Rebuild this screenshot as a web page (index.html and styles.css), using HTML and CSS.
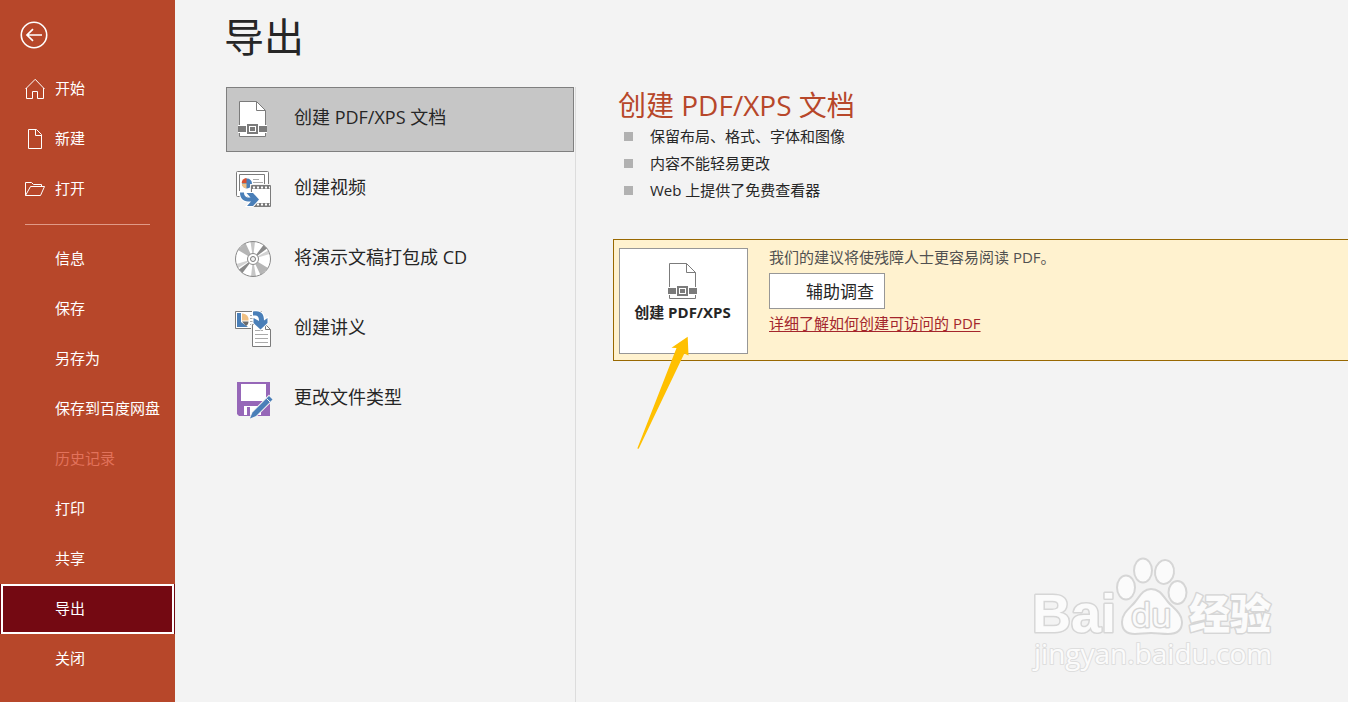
FILE: index.html
```html
<!DOCTYPE html>
<html lang="zh-CN">
<head>
    <meta charset="UTF-8">
    <meta name="viewport" content="width=device-width, initial-scale=1.0">
    <title>导出</title>
    <link rel="stylesheet" href="styles.css">
</head>
<body>
    <div class="backstage">
        <nav class="sidebar">
            <button type="button" class="back" aria-label="返回">
                <svg width="28" height="28" viewBox="0 0 28 28" fill="none" stroke="#fff">
                    <circle cx="14" cy="14" r="12.7" stroke-width="1.6"/>
                    <path d="M22 14H7M13 8.2L7 14l6 5.8" stroke-width="1.7"/>
                </svg>
            </button>

            <button type="button" class="nav-item with-icon">
                <svg width="22" height="22" viewBox="0 0 22 22" fill="none" stroke="#fff">
                    <path d="M1.5 11L11.2 1.3 20.5 11M2.5 10v10.5h6v-7h5v7h6V10"/>
                </svg>
                <span>开始</span>
            </button>
            <button type="button" class="nav-item with-icon">
                <svg width="22" height="22" viewBox="0 0 22 22" fill="none" stroke="#fff">
                    <path d="M4.5 1.5h8l5 5v14h-13zM11.500 1.500v6h6"/>
                </svg>
                <span>新建</span>
            </button>
            <button type="button" class="nav-item with-icon">
                <svg width="22" height="22" viewBox="0 0 22 22" fill="none" stroke="#fff">
                    <path d="M1.5 17.5v-13h6l2 2h8v2M1.5 17.5l5-9h14l-4 9z"/>
                </svg>
                <span>打开</span>
            </button>

            <hr class="divider">

            <button type="button" class="nav-item"><span>信息</span></button>
            <button type="button" class="nav-item"><span>保存</span></button>
            <button type="button" class="nav-item"><span>另存为</span></button>
            <button type="button" class="nav-item"><span>保存到百度网盘</span></button>
            <button type="button" class="nav-item" disabled><span>历史记录</span></button>
            <button type="button" class="nav-item"><span>打印</span></button>
            <button type="button" class="nav-item"><span>共享</span></button>
            <button type="button" class="nav-item active"><span>导出</span></button>
            <button type="button" class="nav-item"><span>关闭</span></button>
        </nav>

        <main class="main">
            <h1>导出</h1>
            <div class="columns">
                <div class="options">
                    <button type="button" class="option selected">
                        <svg width="40" height="41" viewBox="0 0 40 41">
                            <path d="M6.5 2.5h17l9 9v26h-26z" fill="#fff" stroke="#7b7b7b"/>
                            <path d="M23.5 2.5v9h9" fill="none" stroke="#7b7b7b"/>
                            <path d="M5 26h29v8H5z" fill="#fff"/>
                            <path d="M5 27h8v6H5zM26 27h8v6h-8z" fill="#7b7b7b"/>
                            <path d="M15 26h9v8h-9z" fill="#fff" stroke="#7b7b7b" stroke-width="2"/>
                            <path d="M17 28h5v4h-5z" fill="#7b7b7b"/>
                        </svg>
                        <span>创建 PDF/XPS 文档</span>
                    </button>
                    <button type="button" class="option">
                        <svg width="40" height="41" viewBox="0 0 40 41">
                            <rect x="3.5" y="2.5" width="32" height="25" rx="1" fill="#fff" stroke="#7b7b7b"/>
                            <path d="M6.5 22V5.5h25V15" fill="none" stroke="#7b7b7b"/>
                            <circle cx="14" cy="14.5" r="5" fill="#4a7fb8"/>
                            <path d="M13.5 14V9a5 5 0 0 0-4.8 5z" fill="#d9502f"/>
                            <path d="M13.5 14.5H8.7a5 5 0 0 0 4.8 5z" fill="#f0c083"/>
                            <path d="M20 10.5h6M20 13.5h10" stroke="#aaa"/>
                            <path d="M17 15h22v24H17z" fill="#f3f3f3"/>
                            <path d="M18.5 16.5h19v21h-19z" fill="#fff" stroke="#7b7b7b"/>
                            <path d="M19 18.5h18M19 35.5h18" stroke="#7b7b7b" stroke-width="3"/>
                            <path d="M20 18.5h17M20 35.5h17" stroke="#fff" stroke-width="2" stroke-dasharray="2 2"/>
                            <path d="M7 23.5h4c0 3.500 2 5 5 5h1.500l-4-4.500h6.500l6 6.500-6 6.500H14l4-4.500h-3C10 32.500 7 29 7 23.500z" fill="#4a7fb8" stroke="#fff" paint-order="stroke" stroke-width="2"/>
                        </svg>
                        <span>创建视频</span>
                    </button>
                    <button type="button" class="option">
                        <svg width="40" height="41" viewBox="0 0 40 41">
                            <circle cx="20" cy="20" r="17.5" fill="#fff"/>
                            <path d="M20 20L5 11l7.5-7z" fill="#b5b5b5"/>
                            <path d="M20 20L35 29l-7.5 7z" fill="#b5b5b5"/>
                            <path d="M20 20L17.5 2.5h4.5z" fill="#c6c6c6"/>
                            <path d="M20 20l-2 17.5h5z" fill="#c6c6c6"/>
                            <path d="M20 20L30.5 6l3.5 3.5z" fill="#8a8a8a"/>
                            <path d="M20 20L6 30.5 9.5 34z" fill="#8a8a8a"/>
                            <path d="M20 20L35 11.5l1.5 3.5z" fill="#d2d2d2"/>
                            <path d="M20 20L3.5 25l1.5 4z" fill="#d2d2d2"/>
                            <circle cx="20" cy="20" r="17.5" fill="none" stroke="#8a8a8a"/>
                            <circle cx="20" cy="20" r="5.5" fill="#fff" stroke="#8a8a8a"/>
                            <circle cx="20" cy="20" r="2.5" fill="#f3f3f3" stroke="#7b7b7b"/>
                        </svg>
                        <span>将演示文稿打包成 CD</span>
                    </button>
                    <button type="button" class="option">
                        <svg width="40" height="41" viewBox="0 0 40 41">
                            <path d="M2.5 2.5h26v17h-26z" fill="#fff" stroke="#7b7b7b"/>
                            <path d="M4 4h4v9l7 5H4z" fill="#4a7fb8"/>
                            <path d="M9 4.5h1a6 6 0 0 1 5.5 7H9z" fill="#f0c083"/>
                            <path d="M9 12.5h6.5c0 2-1 4-2.5 4.5z" fill="#6b6b6b"/>
                            <path d="M17 6.5h4M17 9.5h5M17 12.5h3M17 15.5h5" stroke="#aaa"/>
                            <path d="M18 14h14l7 7v18H18z" fill="#f3f3f3"/>
                            <path d="M19.5 15.5h13l5 5v17h-18z" fill="#fff" stroke="#7b7b7b"/>
                            <path d="M32.5 15.5v5h5" fill="none" stroke="#7b7b7b"/>
                            <path d="M22 21.5h8M22 25.5h13M22 29.5h13M22 33.5h13" stroke="#aaa"/>
                            <path d="M20 2.5c8-1.500 11 2 11 9l3.500-2.500v5L27.500 20.500l-7-6.500V9l5.500 3c0-4-1-6-6-5.500z" fill="#4a7fb8" stroke="#fff" paint-order="stroke" stroke-width="2"/>
                        </svg>
                        <span>创建讲义</span>
                    </button>
                    <button type="button" class="option">
                        <svg width="40" height="41" viewBox="0 0 40 41">
                            <path d="M4 3h33v34H6l-2-2z" fill="#9667b8"/>
                            <path d="M8 5h25v17H8z" fill="#fff"/>
                            <path d="M11 27h17v9H11z" fill="#fff"/>
                            <path d="M14 28h3v8h-3z" fill="#9667b8"/>
                            <path d="M36 17l3.5 3.5L23 37l-6 2.5 2.5-6z" fill="#4a7fb8" stroke="#f3f3f3" paint-order="stroke" stroke-width="2"/>
                            <path d="M33.5 19.5l3.5 3.5" stroke="#f3f3f3"/>
                        </svg>
                        <span>更改文件类型</span>
                    </button>
                </div>

                <section class="detail">
                    <h2>创建 PDF/XPS 文档</h2>
                    <ul class="features">
                        <li>保留布局、格式、字体和图像</li>
                        <li>内容不能轻易更改</li>
                        <li>Web 上提供了免费查看器</li>
                    </ul>

                    <div class="banner">
                        <button type="button" class="create">
                            <svg width="40" height="41" viewBox="0 0 40 41">
                                <path d="M6.5 2.5h17l9 9v26h-26z" fill="#fff" stroke="#7b7b7b"/>
                                <path d="M23.5 2.5v9h9" fill="none" stroke="#7b7b7b"/>
                                <path d="M5 26h29v8H5z" fill="#fff"/>
                                <path d="M5 27h8v6H5zM26 27h8v6h-8z" fill="#7b7b7b"/>
                                <path d="M15 26h9v8h-9z" fill="#fff" stroke="#7b7b7b" stroke-width="2"/>
                                <path d="M17 28h5v4h-5z" fill="#7b7b7b"/>
                            </svg>
                            创建 PDF/XPS
                        </button>
                        <div class="advice">
                            <p>我们的建议将使残障人士更容易阅读 PDF。</p>
                            <button type="button" class="check">辅助调查</button>
                            <a href="#">详细了解如何创建可访问的 PDF</a>
                        </div>
                        <svg class="pointer" width="54" height="114" viewBox="0 0 54 114">
                            <path d="M51.7 0.7L35.5 11.8l5 .2L1.3 112.5l1.4.3L48.3 17.5l4.2 2z" fill="#ffc000"/>
                        </svg>
                    </div>
                </section>
            </div>

            <svg class="watermark" width="250" height="125" viewBox="0 0 250 125">
                <g fill="#fbfbfb" stroke="#d6d6d6" stroke-width="2">
                    <ellipse cx="96" cy="32.5" rx="9" ry="12"/>
                    <ellipse cx="113" cy="15.5" rx="9" ry="12"/>
                    <ellipse cx="134.5" cy="17" rx="9.5" ry="12" transform="rotate(8 134.5 17)"/>
                    <ellipse cx="147.5" cy="37.5" rx="9" ry="11.5"/>
                    <path d="M121 34c9 0 12 7 17 13s14 11 14 20c0 10-7 12-14 12-7 0-10-1-17-1s-10 1-16 1c-8 0-13-4-13-12 0-9 8-14 13-20s8-13 16-13z"/>
                </g>
                <text class="wm-bai" x="2" y="77">Bai</text>
                <text class="wm-du" x="101" y="72">du</text>
                <text class="wm-cn" x="159" y="74">经验</text>
                <text class="wm-url" x="4" y="109">jingyan.baidu.com</text>
            </svg>
        </main>
    </div>
</body>
</html>
```
FILE: styles.css
```css
/* Reset styles */
* {
    margin: 0;
    padding: 0;
    box-sizing: border-box;
}

body {
    font-family: "Open Sans", "Noto Sans CJK SC", sans-serif;
    font-size: 15px;
    color: #262626;
    background-color: #f3f3f3;
}

button {
    border: none;
    background: none;
    font: inherit;
    color: inherit;
    cursor: pointer;
}

svg {
    display: block;
    flex: none;
}

.backstage {
    display: flex;
    min-height: 100vh;
}

/* Sidebar */
.sidebar {
    flex: none;
    width: 175px;
    background-color: #b7472a;
    color: #fff;
}

.back {
    display: block;
    padding: 21px 20px 15px;
}

.nav-item {
    display: flex;
    align-items: center;
    width: 100%;
    height: 50px;
    padding-left: 55px;
    line-height: 24px;
    white-space: nowrap;
}

.nav-item span {
    padding-bottom: 2px;
}

.nav-item.with-icon {
    gap: 9px;
    padding-left: 24px;
}

.nav-item:disabled {
    color: #e2725b;
    cursor: default;
}

.nav-item.active {
    width: 173px;
    margin: 0 1px;
    padding-left: 52px;
    background-color: #740912;
    border: 2px solid #fff;
    box-shadow: 1px 0 #740912, -1px 0 #740912;
}

.divider {
    height: 1px;
    margin: 10px 25px 9px;
    border: none;
    background-color: #e09a87;
}

/* Main area */
.main {
    position: relative;
    display: flex;
    flex: 1;
    flex-direction: column;
    min-width: 0;
}

h1 {
    padding: 12px 49px 15px;
    font-size: 40px;
    font-weight: 400;
    line-height: 50px;
}

.columns {
    display: flex;
    flex: 1;
    margin-top: 10px;
}

/* Export types */
.options {
    display: flex;
    flex: none;
    flex-direction: column;
    gap: 5px;
    width: 401px;
    padding-left: 51px;
    padding-right: 1px;
    border-right: 1px solid #dcdcdc;
}

.option {
    display: flex;
    align-items: center;
    gap: 21px;
    height: 65px;
    padding-left: 6px;
    border: 1px solid transparent;
    font-size: 18px;
    text-align: left;
}

.option span {
    padding-bottom: 7px;
}

.option.selected {
    background-color: #c6c6c6;
    border-color: #7f7f7f;
}

/* Detail panel */
.detail {
    flex: 1;
    min-width: 0;
    padding-left: 37px;
}

h2 {
    padding-left: 5px;
    font-size: 28px;
    font-weight: 400;
    line-height: 36px;
    color: #b7472a;
}

.features {
    padding-left: 11px;
    list-style: none;
}

.features li {
    display: flex;
    align-items: center;
    gap: 17px;
    line-height: 27px;
}

.features li::before {
    content: "";
    width: 9px;
    height: 9px;
    background-color: #b1b1b1;
}

.banner {
    position: relative;
    display: flex;
    gap: 21px;
    margin-top: 35px;
    padding: 8px 5px 6px;
    background-color: #fff2cf;
    border: 1px solid #986801;
    border-right: none;
}

.create {
    display: flex;
    flex-direction: column;
    align-items: center;
    width: 129px;
    height: 106px;
    padding: 12px 2px 0 0;
    background-color: #fff;
    border: 1px solid #979797;
    font-weight: 700;
    line-height: 20px;
}

.advice {
    display: flex;
    flex-direction: column;
    align-items: flex-start;
}

.advice p {
    line-height: 18px;
    color: #515151;
}

.check {
    height: 36px;
    margin: 7px 0 5px;
    padding: 0 10px 2px 36px;
    background-color: #fff;
    border: 1px solid #979797;
    font-size: 17px;
}

.advice a {
    line-height: 18px;
    color: #a4262c;
    text-underline-offset: 2px;
}

.pointer {
    position: absolute;
    top: 96px;
    left: 22px;
}

/* Watermark */
.watermark {
    position: absolute;
    right: 68px;
    bottom: 22px;
}

.watermark text {
    fill: #fbfbfb;
    stroke: #d6d6d6;
    stroke-width: 3px;
    stroke-linejoin: round;
    paint-order: stroke;
}

.wm-bai {
    font: 700 54px "Liberation Sans", sans-serif;
}

.wm-du {
    font: 400 33px "Open Sans", sans-serif;
}

.wm-cn {
    font: 900 41px "Noto Sans CJK SC", sans-serif;
}

.watermark .wm-url {
    font: 400 28px "Open Sans", sans-serif;
    font-size: 28px;
    stroke: #dedede;
    stroke-width: 2px;
}
```
